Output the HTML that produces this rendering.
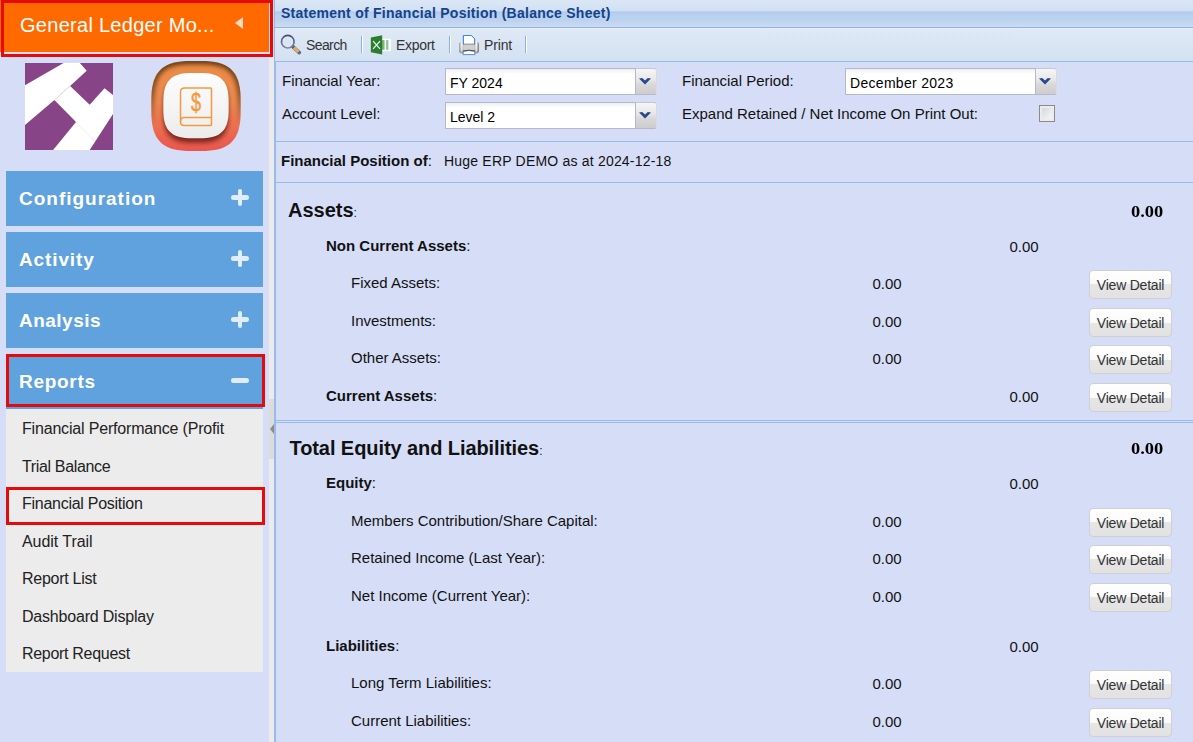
<!DOCTYPE html>
<html>
<head>
<meta charset="utf-8">
<title>Statement of Financial Position</title>
<style>
*{box-sizing:border-box;margin:0;padding:0}
html,body{width:1193px;height:742px;overflow:hidden;background:#d6def7;font-family:"Liberation Sans",sans-serif;}
.abs{position:absolute}
#root{position:relative;width:1193px;height:742px;overflow:hidden;background:#d6def7}
/* sidebar */
#hdr{position:absolute;left:0;top:0;width:269px;height:52px;background:#ff6a00}
#hdrred{position:absolute;left:1px;top:0;width:272px;height:57px;border:3px solid #e60a0a}
#hdrtxt{position:absolute;left:20px;top:13px;font-size:20px;letter-spacing:0.28px;color:#fff;white-space:nowrap;line-height:24px}
#hdrarrow{position:absolute;left:235px;top:17px;width:0;height:0;border-top:6.5px solid transparent;border-bottom:6.5px solid transparent;border-right:8px solid #ffd9bf}
.menu{position:absolute;left:6px;width:257px;height:54.700px;background:#5fa2dd;color:#fff;font-weight:bold;font-size:19px;line-height:56px;padding-left:13px;overflow:hidden;white-space:nowrap}
.menu .ic{position:absolute;left:0;top:0;width:257px;height:54px}
.menu .ic:before{content:"";position:absolute;left:224.900px;top:24.200px;width:18.500px;height:4.700px;background:#e1edf8;border-radius:2.300px}
.menu .ic.plus:after{content:"";position:absolute;left:231.700px;top:17.750px;width:4.800px;height:17.500px;background:#e1edf8;border-radius:2.300px}
#sub{position:absolute;left:6px;top:408.700px;width:257px;height:263.300px;background:#ececec}
.si{position:absolute;left:22px;font-size:16px;color:#222;white-space:nowrap;line-height:20px}
.redbox{position:absolute;border:3px solid #e60a0a}
/* splitter */
#split{position:absolute;left:269px;top:57px;width:5px;height:685px;background:#ebebee}
#splitmini{position:absolute;left:269px;top:399px;width:5px;height:60px;background:#dcdcdc}
/* right panel */
.bl{position:absolute;background:#99bbe8}
#title{position:absolute;left:275px;top:0;width:918px;height:28px;background:linear-gradient(#dbe7f6 0,#d0e0f3 11px,#a9c7eb 12px,#b7cfee 13px,#bcd2ef 20px,#cbdcf2 27px);border-bottom:1px solid #8fb4e4}
#titletxt{position:absolute;left:281px;top:4px;font-size:14px;letter-spacing:0.26px;font-weight:bold;color:#15428b;white-space:nowrap;line-height:18px}
#tb{position:absolute;left:275px;top:28px;width:918px;height:34px;background:linear-gradient(#e6eef8 0,#dfe9f5 2px,#d3e1f1 100%);border-bottom:1px solid #99bbe8}
.tbt{position:absolute;top:36px;font-size:14px;color:#333;line-height:18px;white-space:nowrap}
.sep{position:absolute;top:36px;width:2px;height:17px;border-left:1px solid #86b0ea;border-right:1px solid #fff}
.lbl{position:absolute;font-size:15px;color:#111;white-space:nowrap;line-height:18px}
.b{font-weight:bold}
.combo{position:absolute;height:26.400px}
.combo .in{position:absolute;left:0;top:0;bottom:0;right:21px;background:linear-gradient(#eef0ef 0,#fff 5px);border:1px solid #b5b8c8;border-right:0;font-size:14px;color:#000;line-height:28px;padding-left:4px;white-space:nowrap;overflow:hidden}
.combo .tr{position:absolute;right:0;top:0;bottom:0;width:22px;border:1px solid #b5b8c8;border-radius:0 3px 3px 0;border-right-color:#d9d9de;border-top-color:#c4c6d0;background:linear-gradient(#f6f6f6,#e6e6e6 45%,#d9d9d9 60%,#cdcdcd)}
.combo .tr svg{position:absolute;left:2.700px;top:8.400px}
.val{position:absolute;margin-left:0.5px;font-size:15px;color:#111;line-height:18px;white-space:nowrap}
.bval{position:absolute;font-family:"Liberation Serif",serif;font-weight:bold;font-size:16px;color:#000;line-height:18px;white-space:nowrap;transform:scaleX(1.15);transform-origin:0 0}
.btn{position:absolute;left:1089px;width:83px;height:29px;border:1px solid #cfcfd4;border-radius:4px;background:linear-gradient(#fff 0,#fafafa 50%,#e6e6e6 50%,#e2e2e2 100%);font-size:14px;letter-spacing:-0.22px;color:#333;text-align:center;line-height:28px;white-space:nowrap}
</style>
</head>
<body>
<div id="root">

<!-- SIDEBAR -->
<div id="hdr"></div>
<div id="hdrred"></div>
<div id="hdrtxt">General Ledger Mo...</div>
<div id="hdrarrow"></div>

<div id="logo1" class="abs" style="left:25px;top:62.500px;width:88px;height:87px">
<svg width="88" height="87" viewBox="0 0 88 87"><rect width="88" height="87" fill="#874487"/>
<polygon points="0,22.2 38.600,0 54.900,0 61.700,7.800 45.100,22.900 64.700,41.800 79.500,25.200 88,32 88,51 64.700,87 28.100,87 51,59.100 29.400,37 0,62.100" fill="#fff"/>
<line x1="45.100" y1="22.900" x2="29.400" y2="37" stroke="#c9c9c9" stroke-width="0.800"/>
<line x1="51" y1="59.100" x2="69.300" y2="77.800" stroke="#e2e2e2" stroke-width="0.600"/>
</svg></div>

<div id="logo2" class="abs" style="left:151px;top:60.500px;width:90px;height:91px">
<svg width="90" height="91" viewBox="0 0 90 91">
<defs>
<linearGradient id="g1" x1="0" y1="0" x2="0" y2="1"><stop offset="0" stop-color="#e98a45"/><stop offset="0.45" stop-color="#ed8a50"/><stop offset="1" stop-color="#e9554f"/></linearGradient>
<linearGradient id="g2" x1="0" y1="0" x2="0" y2="1"><stop offset="0" stop-color="#fdfdfd"/><stop offset="1" stop-color="#ececec"/></linearGradient>
<linearGradient id="gm" x1="0" y1="0" x2="0" y2="1"><stop offset="0" stop-color="#fff"/><stop offset="0.35" stop-color="#fff" stop-opacity="0.7"/><stop offset="0.7" stop-color="#fff" stop-opacity="0"/></linearGradient>
<mask id="mk"><rect width="90" height="91" fill="url(#gm)"/></mask>
<clipPath id="cp"><path d="M89.7 45.0 L89.6 54.3 L89.3 59.5 L88.7 63.8 L87.9 67.5 L87.0 70.8 L85.7 73.8 L84.3 76.4 L82.6 78.8 L80.7 81.0 L78.6 82.9 L76.2 84.6 L73.6 86.0 L70.6 87.2 L67.4 88.2 L63.7 89.0 L59.4 89.6 L54.3 89.9 L45.0 90.0 L35.7 89.9 L30.6 89.6 L26.3 89.0 L22.6 88.2 L19.4 87.2 L16.4 86.0 L13.8 84.6 L11.4 82.9 L9.3 81.0 L7.4 78.8 L5.7 76.4 L4.3 73.8 L3.0 70.8 L2.1 67.5 L1.3 63.8 L0.7 59.5 L0.4 54.3 L0.3 45.0 L0.4 35.7 L0.7 30.5 L1.3 26.2 L2.1 22.5 L3.0 19.2 L4.3 16.2 L5.7 13.6 L7.4 11.2 L9.3 9.0 L11.4 7.1 L13.8 5.4 L16.4 4.0 L19.4 2.8 L22.6 1.8 L26.3 1.0 L30.6 0.4 L35.7 0.1 L45.0 0.0 L54.3 0.1 L59.4 0.4 L63.7 1.0 L67.4 1.8 L70.6 2.8 L73.6 4.0 L76.2 5.4 L78.6 7.1 L80.7 9.0 L82.6 11.2 L84.3 13.6 L85.7 16.2 L87.0 19.2 L87.9 22.5 L88.7 26.2 L89.3 30.5 L89.6 35.7 Z"/></clipPath>
<filter id="bl1" x="-20%" y="-20%" width="140%" height="140%"><feGaussianBlur stdDeviation="2.200"/></filter>
<filter id="bl2" x="-20%" y="-20%" width="140%" height="140%"><feGaussianBlur stdDeviation="2"/></filter>
</defs>
<path d="M89.7 45.0 L89.6 54.3 L89.3 59.5 L88.7 63.8 L87.9 67.5 L87.0 70.8 L85.7 73.8 L84.3 76.4 L82.6 78.8 L80.7 81.0 L78.6 82.9 L76.2 84.6 L73.6 86.0 L70.6 87.2 L67.4 88.2 L63.7 89.0 L59.4 89.6 L54.3 89.9 L45.0 90.0 L35.7 89.9 L30.6 89.6 L26.3 89.0 L22.6 88.2 L19.4 87.2 L16.4 86.0 L13.8 84.6 L11.4 82.9 L9.3 81.0 L7.4 78.8 L5.7 76.4 L4.3 73.8 L3.0 70.8 L2.1 67.5 L1.3 63.8 L0.7 59.5 L0.4 54.3 L0.3 45.0 L0.4 35.7 L0.7 30.5 L1.3 26.2 L2.1 22.5 L3.0 19.2 L4.3 16.2 L5.7 13.6 L7.4 11.2 L9.3 9.0 L11.4 7.1 L13.8 5.4 L16.4 4.0 L19.4 2.8 L22.6 1.8 L26.3 1.0 L30.6 0.4 L35.7 0.1 L45.0 0.0 L54.3 0.1 L59.4 0.4 L63.7 1.0 L67.4 1.8 L70.6 2.8 L73.6 4.0 L76.2 5.4 L78.6 7.1 L80.7 9.0 L82.6 11.2 L84.3 13.6 L85.7 16.2 L87.0 19.2 L87.9 22.5 L88.7 26.2 L89.3 30.5 L89.6 35.7 Z" fill="url(#g1)"/>
<g clip-path="url(#cp)"><g mask="url(#mk)"><path d="M89.7 45.0 L89.6 54.3 L89.3 59.5 L88.7 63.8 L87.9 67.5 L87.0 70.8 L85.7 73.8 L84.3 76.4 L82.6 78.8 L80.7 81.0 L78.6 82.9 L76.2 84.6 L73.6 86.0 L70.6 87.2 L67.4 88.2 L63.7 89.0 L59.4 89.6 L54.3 89.9 L45.0 90.0 L35.7 89.9 L30.6 89.6 L26.3 89.0 L22.6 88.2 L19.4 87.2 L16.4 86.0 L13.8 84.6 L11.4 82.9 L9.3 81.0 L7.4 78.8 L5.7 76.4 L4.3 73.8 L3.0 70.8 L2.1 67.5 L1.3 63.8 L0.7 59.5 L0.4 54.3 L0.3 45.0 L0.4 35.7 L0.7 30.5 L1.3 26.2 L2.1 22.5 L3.0 19.2 L4.3 16.2 L5.7 13.6 L7.4 11.2 L9.3 9.0 L11.4 7.1 L13.8 5.4 L16.4 4.0 L19.4 2.8 L22.6 1.8 L26.3 1.0 L30.6 0.4 L35.7 0.1 L45.0 0.0 L54.3 0.1 L59.4 0.4 L63.7 1.0 L67.4 1.8 L70.6 2.8 L73.6 4.0 L76.2 5.4 L78.6 7.1 L80.7 9.0 L82.6 11.2 L84.3 13.6 L85.7 16.2 L87.0 19.2 L87.9 22.5 L88.7 26.2 L89.3 30.5 L89.6 35.7 Z" fill="none" stroke="#55300e" stroke-width="6.500" opacity="0.900" filter="url(#bl1)"/></g>
<path d="M77.7 44.6 L77.6 51.4 L77.4 55.2 L77.0 58.3 L76.4 61.0 L75.7 63.4 L74.8 65.5 L73.8 67.4 L72.5 69.2 L71.1 70.7 L69.6 72.1 L67.8 73.4 L65.9 74.4 L63.8 75.3 L61.4 76.0 L58.7 76.6 L55.6 77.0 L51.8 77.2 L45.0 77.3 L38.2 77.2 L34.4 77.0 L31.3 76.6 L28.6 76.0 L26.2 75.3 L24.1 74.4 L22.2 73.4 L20.4 72.1 L18.9 70.7 L17.5 69.2 L16.2 67.4 L15.2 65.5 L14.3 63.4 L13.6 61.0 L13.0 58.3 L12.6 55.2 L12.4 51.4 L12.3 44.6 L12.4 37.8 L12.6 34.0 L13.0 30.9 L13.6 28.2 L14.3 25.8 L15.2 23.7 L16.2 21.8 L17.5 20.0 L18.9 18.5 L20.4 17.1 L22.2 15.8 L24.1 14.8 L26.2 13.9 L28.6 13.2 L31.3 12.6 L34.4 12.2 L38.2 12.0 L45.0 11.9 L51.8 12.0 L55.6 12.2 L58.7 12.6 L61.4 13.2 L63.8 13.9 L65.9 14.8 L67.8 15.8 L69.6 17.1 L71.1 18.5 L72.5 20.0 L73.8 21.8 L74.8 23.7 L75.7 25.8 L76.4 28.2 L77.0 30.9 L77.4 34.0 L77.6 37.8 Z" fill="#6e1f18" opacity="0.850" transform="translate(0,4.500)" filter="url(#bl2)"/></g>
<path d="M77.7 44.6 L77.6 51.4 L77.4 55.2 L77.0 58.3 L76.4 61.0 L75.7 63.4 L74.8 65.5 L73.8 67.4 L72.5 69.2 L71.1 70.7 L69.6 72.1 L67.8 73.4 L65.9 74.4 L63.8 75.3 L61.4 76.0 L58.7 76.6 L55.6 77.0 L51.8 77.2 L45.0 77.3 L38.2 77.2 L34.4 77.0 L31.3 76.6 L28.6 76.0 L26.2 75.3 L24.1 74.4 L22.2 73.4 L20.4 72.1 L18.9 70.7 L17.5 69.2 L16.2 67.4 L15.2 65.5 L14.3 63.4 L13.6 61.0 L13.0 58.3 L12.6 55.2 L12.4 51.4 L12.3 44.6 L12.4 37.8 L12.6 34.0 L13.0 30.9 L13.6 28.2 L14.3 25.8 L15.2 23.7 L16.2 21.8 L17.5 20.0 L18.9 18.5 L20.4 17.1 L22.2 15.8 L24.1 14.8 L26.2 13.9 L28.6 13.2 L31.3 12.6 L34.4 12.2 L38.2 12.0 L45.0 11.9 L51.8 12.0 L55.6 12.2 L58.7 12.6 L61.4 13.2 L63.8 13.9 L65.9 14.8 L67.8 15.8 L69.6 17.1 L71.1 18.5 L72.5 20.0 L73.8 21.8 L74.8 23.7 L75.7 25.8 L76.4 28.2 L77.0 30.9 L77.4 34.0 L77.6 37.8 Z" fill="url(#g2)"/>
<path d="M37.500 27 H59.500 Q60.500 27 60.500 28 V63.500 Q60.500 64.500 59.500 64.500 H33 Q29.500 64.500 29.500 60.500 V31 Q29.500 27 33.500 27 Z" fill="none" stroke="#f5993d" stroke-width="1.500"/>
<path d="M60.500 56.500 H33 Q29.500 56.500 29.500 60.500" fill="none" stroke="#f5993d" stroke-width="1.500"/>
<text x="0" y="0" transform="translate(45,50.200) scale(0.700,1)" font-family="Liberation Sans, sans-serif" font-size="26" fill="#f5993d" stroke="#f5993d" stroke-width="0.500" text-anchor="middle">$</text>
</svg></div>

<div class="menu" style="top:171px;letter-spacing:0.99px">Configuration<span class="ic plus"></span></div>
<div class="menu" style="top:232.100px;letter-spacing:0.88px">Activity<span class="ic plus"></span></div>
<div class="menu" style="top:293.200px;letter-spacing:0.48px">Analysis<span class="ic plus"></span></div>
<div class="menu" style="top:354.300px;letter-spacing:0.7px">Reports<span class="ic"></span></div>
<div class="redbox" style="left:6px;top:354px;width:259px;height:53px"></div>

<div id="sub"></div>
<div class="si" style="top:419px;letter-spacing:-0.18px">Financial Performance (Profit</div>
<div class="si" style="top:456.5px;letter-spacing:-0.35px">Trial Balance</div>
<div class="si" style="top:494px;letter-spacing:-0.27px">Financial Position</div>
<div class="si" style="top:531.5px;letter-spacing:-0.06px">Audit Trail</div>
<div class="si" style="top:569px;letter-spacing:-0.27px">Report List</div>
<div class="si" style="top:606.5px;letter-spacing:-0.2px">Dashboard Display</div>
<div class="si" style="top:644px;letter-spacing:-0.3px">Report Request</div>
<div class="redbox" style="left:6px;top:487px;width:259px;height:38px"></div>

<div id="split"></div>
<div id="splitmini"></div>
<div class="abs" style="left:270px;top:424px;width:0;height:0;border-top:5px solid transparent;border-bottom:5px solid transparent;border-right:4px solid #8c8c8c"></div>

<!-- RIGHT PANEL -->
<div class="bl" style="left:274px;top:0;width:1px;height:742px"></div>
<div id="title"></div>
<div id="titletxt">Statement of Financial Position (Balance Sheet)</div>
<div id="tb"></div>

<!-- toolbar items -->
<svg class="abs" style="left:280px;top:34px" width="22" height="22" viewBox="0 0 22 22">
<defs><linearGradient id="lg1" x1="0" y1="0" x2="0" y2="1"><stop offset="0" stop-color="#3f4f7d"/><stop offset="1" stop-color="#7a88aa"/></linearGradient>
<radialGradient id="rg1" cx="0.5" cy="0.5" r="0.5"><stop offset="0" stop-color="#dde3ee"/><stop offset="0.75" stop-color="#e1e7f1"/><stop offset="1" stop-color="#f3f5fa"/></radialGradient></defs>
<line x1="12.800" y1="12.600" x2="19.300" y2="18.600" stroke="#5a6685" stroke-width="3.600" stroke-linecap="round"/>
<line x1="13.800" y1="13.500" x2="18.600" y2="17.900" stroke="#e2ac5e" stroke-width="3.200"/>
<line x1="11.800" y1="11.700" x2="13.800" y2="13.500" stroke="#4a5878" stroke-width="2.800"/>
<circle cx="7.800" cy="7.700" r="6.300" fill="url(#rg1)" stroke="url(#lg1)" stroke-width="1.700"/>
</svg>
<div class="tbt" style="left:306px;letter-spacing:-0.6px">Search</div>
<div class="sep" style="left:361px"></div>
<svg class="abs" style="left:370px;top:34px" width="22" height="22" viewBox="0 0 22 22">
<defs><linearGradient id="xg1" x1="0" y1="0" x2="1" y2="0"><stop offset="0" stop-color="#4e9a52"/><stop offset="1" stop-color="#a9d2ab"/></linearGradient></defs>
<rect x="12" y="4.700" width="8.900" height="12.500" fill="#fff"/>
<rect x="12.200" y="6.100" width="2.600" height="9.700" fill="url(#xg1)"/><rect x="16.100" y="6.100" width="2.300" height="9.700" fill="#8ec391"/>
<polygon points="0.850,3.500 12.200,1.300 12.200,20.500 0.850,18.200" fill="#2b7d2f"/>
<path d="M3.100 7.100 L10 14.800 M10 7.100 L3.100 14.800" stroke="#e9f3ea" stroke-width="1.250" fill="none"/>
</svg>
<div class="tbt" style="left:396px;letter-spacing:-0.3px">Export</div>
<div class="sep" style="left:449px"></div>
<svg class="abs" style="left:459px;top:34px" width="21" height="22" viewBox="0 0 21 22">
<defs><linearGradient id="pg1" x1="0" y1="0" x2="1" y2="0"><stop offset="0" stop-color="#8f8f8f"/><stop offset="0.120" stop-color="#f4f4f4"/><stop offset="0.240" stop-color="#b9b9b9"/><stop offset="0.500" stop-color="#d2d2d2"/><stop offset="0.760" stop-color="#b9b9b9"/><stop offset="0.880" stop-color="#f6f6f6"/><stop offset="1" stop-color="#666"/></linearGradient>
<linearGradient id="pg2" x1="0" y1="0" x2="0" y2="1"><stop offset="0" stop-color="#fff" stop-opacity="0"/><stop offset="0.700" stop-color="#777" stop-opacity="0.150"/><stop offset="1" stop-color="#333" stop-opacity="0.550"/></linearGradient></defs>
<path d="M4.400 11 V1.500 H12.300 L15.600 4.800 V11 Z" fill="#fdfdfe" stroke="#3f84d8" stroke-width="1"/>
<path d="M12.300 1.500 V4.800 H15.600 Z" fill="#5b95de"/>
<rect x="0.200" y="7.600" width="19.700" height="12" rx="3" fill="url(#pg1)"/>
<rect x="0.200" y="7.600" width="19.700" height="12" rx="3" fill="url(#pg2)"/>
<path d="M4.400 10 V1.500 H12.300 L15.600 4.800 V10" fill="#fdfdfe"/>
<path d="M4.400 10 V1.500 H12.300 L15.600 4.800 V10" fill="none" stroke="#3f84d8" stroke-width="1"/>
<line x1="4" y1="10.200" x2="16" y2="10.200" stroke="#555" stroke-width="0.800"/>
<rect x="4.500" y="10.600" width="11" height="6" fill="#d0d0d0"/>
<path d="M4.300 17.300 Q10 15.800 15.700 17.300 L16 20.600 H4 Z" fill="#fff" stroke="#3f84d8" stroke-width="0.900"/>
<path d="M4 17 Q10 15.300 16 17" fill="none" stroke="#444" stroke-width="0.900"/>
</svg>
<div class="tbt" style="left:484px;letter-spacing:-0.15px">Print</div>
<div class="sep" style="left:525px"></div>

<!-- form -->
<div class="bl" style="left:275px;top:62px;width:1px;height:680px"></div>
<div class="bl" style="left:275px;top:141px;width:918px;height:1px"></div>
<div class="lbl" style="left:282px;top:72px">Financial Year:</div>
<div class="lbl" style="left:282px;top:105px">Account Level:</div>
<div class="lbl" style="left:682px;top:72px">Financial Period:</div>
<div class="lbl" style="left:682px;top:105px">Expand Retained / Net Income On Print Out:</div>
<div class="combo" style="left:445px;top:68.200px;width:212px"><div class="in">FY 2024</div><div class="tr"><svg width="12" height="7" viewBox="0 0 12 7"><polygon points="0,0.400 3.200,0 6,2.600 8.800,0 12,0.400 6,6.500" fill="#29498f"/></svg></div></div>
<div class="combo" style="left:445px;top:102.200px;width:212px"><div class="in">Level 2</div><div class="tr"><svg width="12" height="7" viewBox="0 0 12 7"><polygon points="0,0.400 3.200,0 6,2.600 8.800,0 12,0.400 6,6.500" fill="#29498f"/></svg></div></div>
<div class="combo" style="left:845px;top:68.200px;width:212px"><div class="in" style="letter-spacing:0.3px">December 2023</div><div class="tr"><svg width="12" height="7" viewBox="0 0 12 7"><polygon points="0,0.400 3.200,0 6,2.600 8.800,0 12,0.400 6,6.500" fill="#29498f"/></svg></div></div>
<div class="abs" style="left:1039.200px;top:105.200px;width:16px;height:16.400px;border:1px solid #8a8a8a;background:#ececec;padding:2px"><div style="width:100%;height:100%;background:linear-gradient(135deg,#d6dade,#f6f6f6)"></div></div>

<div class="lbl b" style="left:281px;top:152px">Financial Position of<span style="font-weight:normal">:</span></div>
<div class="lbl" style="left:444px;top:152px;font-size:14px;letter-spacing:0.2px">Huge ERP DEMO as at 2024-12-18</div>

<!-- Assets panel -->
<div class="bl" style="left:275px;top:182px;width:918px;height:1px"></div>
<div class="lbl b" style="left:288px;top:198px;font-size:20px;line-height:24px">Assets<span style="font-weight:normal;font-size:12px">:</span></div>
<div class="bval" style="left:1130.700px;top:202.500px">0.00</div>
<div class="lbl b" style="left:326px;top:237px">Non Current Assets<span style="font-weight:normal">:</span></div>
<div class="val" style="left:1009px;top:238px">0.00</div>
<div class="lbl" style="left:351px;top:274px">Fixed Assets:</div>
<div class="val" style="left:872px;top:275px">0.00</div>
<div class="btn" style="top:270px">View Detail</div>
<div class="lbl" style="left:351px;top:312px">Investments:</div>
<div class="val" style="left:872px;top:313px">0.00</div>
<div class="btn" style="top:308px">View Detail</div>
<div class="lbl" style="left:351px;top:349px">Other Assets:</div>
<div class="val" style="left:872px;top:350px">0.00</div>
<div class="btn" style="top:345px">View Detail</div>
<div class="lbl b" style="left:326px;top:387px">Current Assets<span style="font-weight:normal">:</span></div>
<div class="val" style="left:1009px;top:388px">0.00</div>
<div class="btn" style="top:383px">View Detail</div>

<!-- Equity & Liabilities panel -->
<div class="bl" style="left:275px;top:420px;width:918px;height:1px"></div>
<div class="bl" style="left:275px;top:422px;width:918px;height:1px"></div>
<div class="lbl b" style="left:289.500px;top:436px;font-size:20px;line-height:24px;letter-spacing:-0.08px">Total Equity and Liabilities<span style="font-weight:normal;font-size:12px">:</span></div>
<div class="bval" style="left:1130.700px;top:439.500px">0.00</div>
<div class="lbl b" style="left:326px;top:474px">Equity<span style="font-weight:normal">:</span></div>
<div class="val" style="left:1009px;top:475px">0.00</div>
<div class="lbl" style="left:351px;top:512px">Members Contribution/Share Capital:</div>
<div class="val" style="left:872px;top:513px">0.00</div>
<div class="btn" style="top:508px">View Detail</div>
<div class="lbl" style="left:351px;top:549px">Retained Income (Last Year):</div>
<div class="val" style="left:872px;top:550px">0.00</div>
<div class="btn" style="top:545px">View Detail</div>
<div class="lbl" style="left:351px;top:587px">Net Income (Current Year):</div>
<div class="val" style="left:872px;top:588px">0.00</div>
<div class="btn" style="top:583px">View Detail</div>
<div class="lbl b" style="left:326px;top:637px">Liabilities<span style="font-weight:normal">:</span></div>
<div class="val" style="left:1009px;top:638px">0.00</div>
<div class="lbl" style="left:351px;top:674px">Long Term Liabilities:</div>
<div class="val" style="left:872px;top:675px">0.00</div>
<div class="btn" style="top:670px">View Detail</div>
<div class="lbl" style="left:351px;top:712px">Current Liabilities:</div>
<div class="val" style="left:872px;top:713px">0.00</div>
<div class="btn" style="top:708px">View Detail</div>

</div>
</body>
</html>
